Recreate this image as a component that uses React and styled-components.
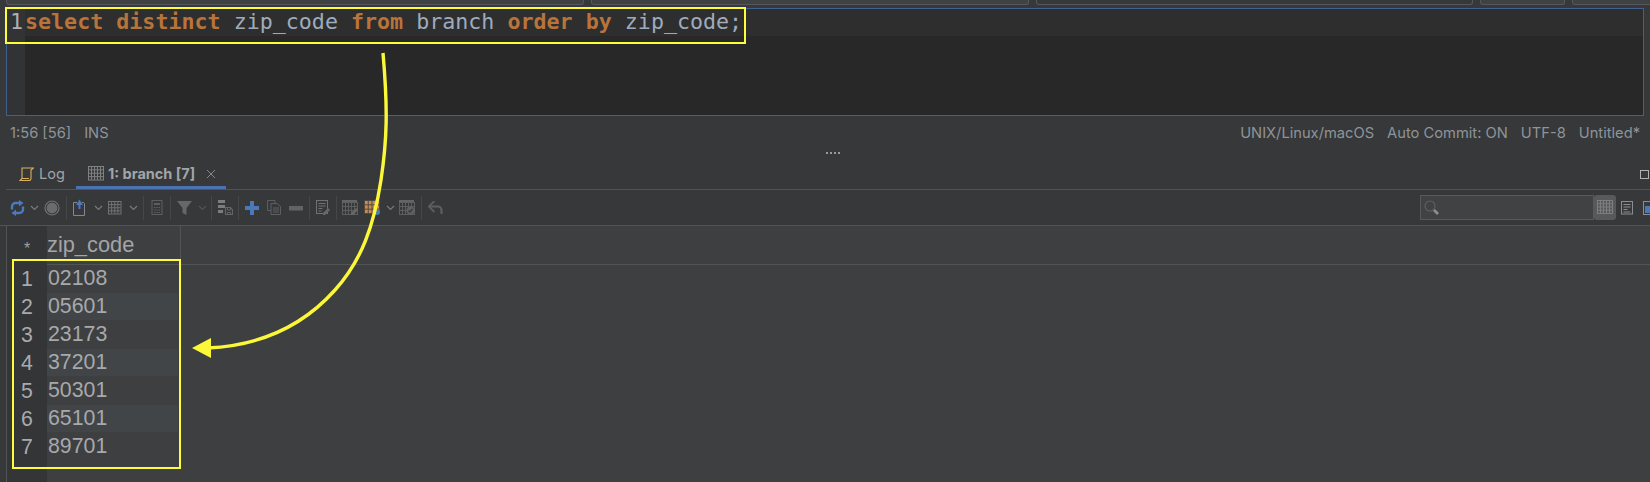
import React from 'react'
import styled, { createGlobalStyle } from 'styled-components'

const Global = createGlobalStyle`
  html, body { margin: 0; padding: 0; background: #36383a; }
`

const Page = styled.div`
  position: relative;
  width: 1650px;
  height: 482px;
  overflow: hidden;
  display: flex;
  flex-direction: column;
  background: #36383a;
  font-family: Inter, "Liberation Sans", sans-serif;
`

const TopStrip = styled.div`
  height: 6px;
  margin-bottom: 2px;
  padding-left: 6px;
  display: flex;
  gap: 7px;
  overflow: hidden;
`

const TopField = styled.div`
  width: ${p => p.$w}px;
  flex: none;
  height: 5px;
  background: ${p => (p.$dark ? '#37383a' : '#3f4143')};
  border: 1px solid #55575a;
  border-top: none;
  border-radius: 0 0 3px 3px;
  box-sizing: border-box;
`

const Editor = styled.div`
  margin-left: 6px;
  width: 1638px;
  height: 108px;
  box-sizing: border-box;
  border: 1px solid #41608f;
  background: #282828;
  display: flex;
  flex: none;
`

const Gutter = styled.div`
  width: 18px;
  flex: none;
  background: #313335;
`

const Code = styled.div`
  flex: 1;
  min-width: 0;
`

const CurrentLine = styled.div`
  height: 27px;
  line-height: 26px;
  background: #2e2e2e;
  font-family: "DejaVu Sans Mono", monospace;
  font-size: 21.66px;
  color: #9dabbd;
  white-space: pre;
`

const LineNo = styled.span`
  position: absolute;
  left: 10px;
  color: #b0b0b0;
`

const Kw = styled.span`
  color: #b8743a;
  font-weight: 700;
`

const Status = styled.div`
  height: 36px;
  flex: none;
  box-sizing: border-box;
  padding: 0 10px 2px 10px;
  display: flex;
  align-items: center;
  gap: 13px;
  font-size: 14.7px;
  color: #8f9499;
`

const Spacer = styled.div`
  flex: 1;
`

const Dots = styled.div`
  height: 6px;
  flex: none;
  display: flex;
  justify-content: center;
  gap: 2px;
  padding-left: 16px;

  i {
    width: 2px;
    height: 2px;
    background: #9a9a9a;
  }
`

const TabBar = styled.div`
  height: 30px;
  margin-top: 2px;
  margin-left: 6px;
  flex: none;
  box-sizing: border-box;
  border-bottom: 1px solid #515355;
  display: flex;
  position: relative;
`

const Tab = styled.div`
  height: 29px;
  box-sizing: border-box;
  padding: 1px 0 0 ${p => p.$pad}px;
  width: ${p => p.$w}px;
  display: flex;
  align-items: center;
  font-size: 14.5px;
  color: #a2a5a8;
  gap: ${p => p.$gap}px;
  font-weight: ${p => (p.$active ? 700 : 400)};
  border-bottom: ${p => (p.$active ? '3px solid #4b73b3' : '3px solid transparent')};
`

const MaxButton = styled.div`
  position: absolute;
  right: 1px;
  top: 10px;
  width: 7px;
  height: 7px;
  border: 1px solid #b0b0b0;
`

const Toolbar = styled.div`
  height: 36px;
  flex: none;
  box-sizing: border-box;
  border-bottom: 1px solid #515355;
  padding-left: 7px;
  display: flex;
  align-items: center;
`

const Tool = styled.div`
  width: ${p => p.$w}px;
  flex: none;
  display: flex;
  justify-content: center;
  align-items: center;
  height: 24px;
`

const Sep = styled.div`
  width: 1px;
  height: 24px;
  background: #454749;
`

const Search = styled.div`
  margin-left: auto;
  width: 174px;
  height: 25px;
  box-sizing: border-box;
  flex: none;
  background: #414243;
  border: 1px solid #58595b;
  display: flex;
  align-items: center;
  padding-left: 3px;
`

const ViewButton = styled.div`
  width: ${p => p.$w}px;
  height: 25px;
  flex: none;
  display: flex;
  align-items: center;
  justify-content: ${p => (p.$end ? 'flex-end' : 'center')};
  border-radius: 3px;
  background: ${p => (p.$on ? '#59595b' : 'transparent')};
`

const Grid = styled.div`
  flex: 1;
  margin-left: 6px;
  border-left: 1px solid #515355;
  background: #3e3f41;
  display: flex;
`

const RowNumbers = styled.div`
  width: 40px;
  flex: none;
  background: #333537;
  color: #a7abaf;
  font-family: "Liberation Sans", sans-serif;
  font-size: 21.3px;
  text-align: center;
`

const NumCell = styled.div`
  height: 28px;
  line-height: 28px;
`

const Star = styled.div`
  height: 39px;
  line-height: 45px;
  font-size: 16px;
  color: #a0a0a0;
`

const Column = styled.div`
  width: 133px;
  flex: none;
  border-right: 1px solid #515355;
  height: 38px;
`

const Header = styled.div`
  height: 38px;
  line-height: 38px;
  box-sizing: border-box;
  color: #a3a5a7;
  font-family: "Liberation Sans", sans-serif;
  font-size: 21.8px;
`

const HeaderRule = styled.div`
  position: absolute;
  left: 47px;
  right: 0;
  top: 264px;
  height: 1px;
  background: #515355;
`

const Cell = styled.div`
  width: 131px;
  height: 27px;
  margin-bottom: 1px;
  padding-left: 1px;
  box-sizing: border-box;
  line-height: 27px;
  color: #a7a9ab;
  font-family: "Liberation Sans", sans-serif;
  font-size: 21.3px;
  background: ${p => (p.$odd ? '#414547' : 'transparent')};
`

const Rows = styled.div`
  padding-top: 1px;
`

const Highlight = styled.div`
  position: absolute;
  box-sizing: border-box;
  border: 2px solid #fdfd3c;
  left: ${p => p.$x}px;
  top: ${p => p.$y}px;
  width: ${p => p.$w}px;
  height: ${p => p.$h}px;
  pointer-events: none;
`

const ArrowLayer = styled.svg`
  position: absolute;
  left: 0;
  top: 0;
  pointer-events: none;
`

const G = '#6f7173'
const D = '#5c5e60'
const B = '#4b7ac0'

const Svg = ({ children, w = 16, h = 16 }) => (
  <svg width={w} height={h} viewBox={`0 0 ${w} ${h}`} fill="none">
    {children}
  </svg>
)

const gridLines = (x, y, w, h, nx, ny, c) => (
  <g stroke={c} strokeWidth="1">
    <rect x={x + 0.5} y={y + 0.5} width={w} height={h} />
    {Array.from({ length: nx - 1 }, (_, i) => {
      const px = x + 0.5 + ((i + 1) * w) / nx
      return <path key={'v' + i} d={`M${px} ${y}V${y + h}`} />
    })}
    {Array.from({ length: ny - 1 }, (_, i) => {
      const py = y + 0.5 + ((i + 1) * h) / ny
      return <path key={'h' + i} d={`M${x} ${py}H${x + w}`} />
    })}
  </g>
)

const Chevron = () => (
  <Svg w={9} h={6}>
    <path d="M1 1l3.5 3.5L8 1" stroke="#797b7d" strokeWidth="1.2" />
  </Svg>
)

const Dim = () => (
  <Svg w={9} h={6}>
    <path d="M1 1l3.5 3.5L8 1" stroke="#525456" strokeWidth="1.2" />
  </Svg>
)

const Refresh = () => (
  <Svg w={15} h={16}>
    <path d="M2 9.5V6.5a3.5 3.5 0 0 1 3.5-3.5h5" stroke={B} strokeWidth="2.4" />
    <path d="M13 6.5V9.5A3.5 3.5 0 0 1 9.5 13h-5" stroke={B} strokeWidth="2.4" />
    <path d="M9 0l4.5 3L9 6.5zM6 9.5L1.5 13 6 16z" fill={B} />
  </Svg>
)

const Stop = () => (
  <Svg w={16} h={16}>
    <circle cx="8" cy="8" r="7" stroke="#6f7173" strokeWidth="1.2" />
    <circle cx="8" cy="8" r="5.4" fill="#6a6c6e" />
  </Svg>
)

const Export = () => (
  <Svg w={14} h={17}>
    <path d="M4 3.5H.5v13h11V4.5l-1-1H9" stroke="#85878a" />
    <path d="M6.5 10V5" stroke={B} strokeWidth="2" />
    <path d="M3 6l3.5-5.5L10 6z" fill={B} />
  </Svg>
)

const Table = () => <Svg w={14} h={14}>{gridLines(0, 0, 12.5, 12.5, 4, 4, '#707274')}</Svg>

const Calc = () => (
  <Svg w={12} h={15}>
    <rect x="1" y=".5" width="10" height="14" stroke={D} />
    <path d="M3 3h6v2H3z" fill={D} />
    <path d="M3 7.5h6M3 10h6M3 12.5h6" stroke={D} strokeWidth="1.2" strokeDasharray="1.5 .8" />
  </Svg>
)

const Funnel = () => (
  <Svg w={15} h={15}>
    <path d="M0 1h15L9.5 8v7l-4-2V8z" fill="#666769" />
  </Svg>
)

const SaveGrid = () => (
  <Svg w={15} h={15}>
    <rect x="0" y="0" width="7" height="3" fill="#7b7d80" />
    <rect x="0" y="5" width="7" height="3" fill="#7b7d80" />
    <rect x="0" y="10" width="5" height="3" fill="#7b7d80" />
    <path d="M7.5 7.5h5l2 2v5h-7z" stroke="#626466" strokeWidth="1.2" />
    <path d="M9.5 8v2h3V8M9.5 14.5v-2h3v2" stroke="#626466" />
  </Svg>
)

const Plus = () => (
  <Svg w={14} h={14}>
    <path d="M5 0h4v5h5v4H9v5H5V9H0V5h5z" fill="#4b78b8" />
  </Svg>
)

const Copy = () => (
  <Svg w={14} h={15}>
    <path d="M8 3V.5H.5v10H4" stroke={D} />
    <path d="M4 3.5h6l3.5 3v8H4z" stroke={D} />
    <path d="M6 8h6M6 10h6M6 12h6" stroke={D} />
  </Svg>
)

const Minus = () => (
  <Svg w={14} h={14}>
    <rect x="0" y="5" width="14" height="4.5" fill="#616365" />
  </Svg>
)

const Pencil = ({ x, y }) => (
  <g transform={`translate(${x} ${y})`}>
    <path d="M0 7l5-5 2 2-5 5H0z" fill="#666769" />
  </g>
)

const EditDoc = () => (
  <Svg w={15} h={15}>
    <rect x=".5" y=".5" width="11" height="13" stroke={G} />
    <path d="M2.5 3.5h7M2.5 6h7M2.5 8.5h4M2.5 11h3" stroke={G} />
    <Pencil x={7} y={6} />
  </Svg>
)

const GridEdit = () => (
  <Svg w={16} h={15}>
    <rect x="0" y="0" width="15" height="3" fill="#626466" />
    {gridLines(0, 2, 15, 12, 5, 3, D)}
    <Pencil x={9} y={6} />
  </Svg>
)

const GridOrange = () => (
  <Svg w={16} h={15}>
    <rect x="0" y="0" width="15" height="13" fill="#d08a48" />
    {gridLines(0, 0, 15, 13, 4, 3, '#4c4a48')}
    <circle cx="13" cy="12" r="3" fill="#4b78b8" />
  </Svg>
)

const GridCheck = () => (
  <Svg w={16} h={15}>
    <rect x="0" y="0" width="15" height="3" fill="#626466" />
    {gridLines(0, 2, 15, 12, 5, 3, D)}
    <circle cx="11.5" cy="10.5" r="4" fill="#5e6062" />
    <path d="M9.5 10.5l1.5 1.5 2.5-3" stroke="#36383a" strokeWidth="1.2" />
  </Svg>
)

const Undo = () => (
  <Svg w={15} h={14}>
    <path d="M2 5.5h8a3.5 3.5 0 0 1 3.5 3.5v4" stroke={D} strokeWidth="2.2" />
    <path d="M6.5 0L.8 5.5 6.5 11" stroke={D} strokeWidth="1.8" />
  </Svg>
)

const tools = [
  [20, <Refresh />],
  [14, <Chevron />],
  [22, <Stop />],
  [6, <Sep />],
  [22, <Export />],
  [14, <Chevron />],
  [20, <Table />],
  [16, <Chevron />],
  [4, <Sep />],
  [24, <Calc />],
  [2, <Sep />],
  [26, <Funnel />],
  [10, <Dim />],
  [8, <Sep />],
  [20, <SaveGrid />],
  [6, <Sep />],
  [22, <Plus />],
  [22, <Copy />],
  [22, <Minus />],
  [4, <Sep />],
  [24, <EditDoc />],
  [2, <Sep />],
  [26, <GridEdit />],
  [18, <GridOrange />],
  [18, <Chevron />],
  [16, <GridCheck />],
  [12, <Sep />],
  [16, <Undo />],
]

const zips = ['02108', '05601', '23173', '37201', '50301', '65101', '89701']

const App = () => (
  <Page>
    <Global />
    <TopStrip>
      <TopField $w={578} />
      <TopField $w={438} />
      <TopField $w={437} $dark />
      <TopField $w={85} />
      <TopField $w={90} />
    </TopStrip>

    <Editor>
      <Gutter />
      <Code>
        <CurrentLine>
          <LineNo>1</LineNo>
          <Kw>select</Kw> <Kw>distinct</Kw> zip_code <Kw>from</Kw> branch <Kw>order</Kw> <Kw>by</Kw> zip_code;
        </CurrentLine>
      </Code>
    </Editor>

    <Status>
      <span>1:56 [56]</span>
      <span>INS</span>
      <Spacer />
      <span>UNIX/Linux/macOS</span>
      <span>Auto Commit: ON</span>
      <span>UTF-8</span>
      <span>Untitled*</span>
    </Status>

    <Dots>
      <i />
      <i />
      <i />
      <i />
    </Dots>

    <TabBar>
      <Tab $pad={13} $w={70} $gap={5}>
        <Svg w={15} h={14}>
          <path d="M3 1h11.5l-2.5 2v8.5a2 2 0 0 1-2 2H1l2-2zM3 11.5h7" stroke="#d9b15f" strokeWidth="1.1" />
        </Svg>
        Log
      </Tab>
      <Tab $active $pad={12} $w={150} $gap={4}>
        <Svg w={16} h={15}>{gridLines(0, 0, 15, 13.5, 5, 4, '#7f8183')}</Svg>
        1: branch [7]
        <Svg w={16} h={12}>
          <path d="M8 2l8 8M16 2l-8 8" stroke="#85878a" strokeWidth="1" />
        </Svg>
      </Tab>
      <MaxButton />
    </TabBar>

    <Toolbar>
      {tools.map(([w, icon], i) => (
        <Tool key={i} $w={w}>
          {icon}
        </Tool>
      ))}
      <Search>
        <Svg w={16} h={16}>
          <circle cx="6" cy="6" r="5" stroke="#5f6163" strokeWidth="1.1" />
          <path d="M10 10l4 4" stroke="#8c8e90" strokeWidth="2.6" />
        </Svg>
      </Search>
      <ViewButton $w={22} $on>
        <Svg w={16} h={15}>{gridLines(0, 0, 15, 13, 5, 4, '#7c7e80')}</Svg>
      </ViewButton>
      <ViewButton $w={22}>
        <Svg w={13} h={14}>
          <rect x=".5" y=".5" width="11" height="12.5" stroke="#8b8d8f" />
          <path d="M2.5 3.5h7M2.5 6h7M2.5 8.5h4M2.5 11h7" stroke="#8b8d8f" />
        </Svg>
      </ViewButton>
      <ViewButton $w={12} $end>
        <svg width="7" height="14" viewBox="0 0 7 14" fill="none">
          <rect x=".5" y=".5" width="12" height="13" stroke="#8b8d8f" />
          <rect x="2" y="5" width="5" height="7" fill="#4b78b8" />
        </svg>
      </ViewButton>
    </Toolbar>

    <Grid>
      <RowNumbers>
        <Star>*</Star>
        {zips.map((z, i) => (
          <NumCell key={z}>{i + 1}</NumCell>
        ))}
      </RowNumbers>
      <div>
        <Column>
          <Header>zip_code</Header>
        </Column>
        <Rows>
          {zips.map((z, i) => (
            <Cell key={z} $odd={i % 2 === 1}>
              {z}
            </Cell>
          ))}
        </Rows>
      </div>
    </Grid>

    <HeaderRule />
    <Highlight $x={5} $y={7} $w={741} $h={37} />
    <Highlight $x={12} $y={259} $w={169} $h={210} />

    <ArrowLayer width="1650" height="482">
      <path
        d="M383 53C388 110 387 140 381 180C374 225 362 260 335 290C310 318 270 345 208 348"
        fill="none"
        stroke="#fbf83a"
        strokeWidth="3.4"
      />
      <path d="M192 348L211 338V358Z" fill="#fbf83a" />
    </ArrowLayer>
  </Page>
)

export default App
